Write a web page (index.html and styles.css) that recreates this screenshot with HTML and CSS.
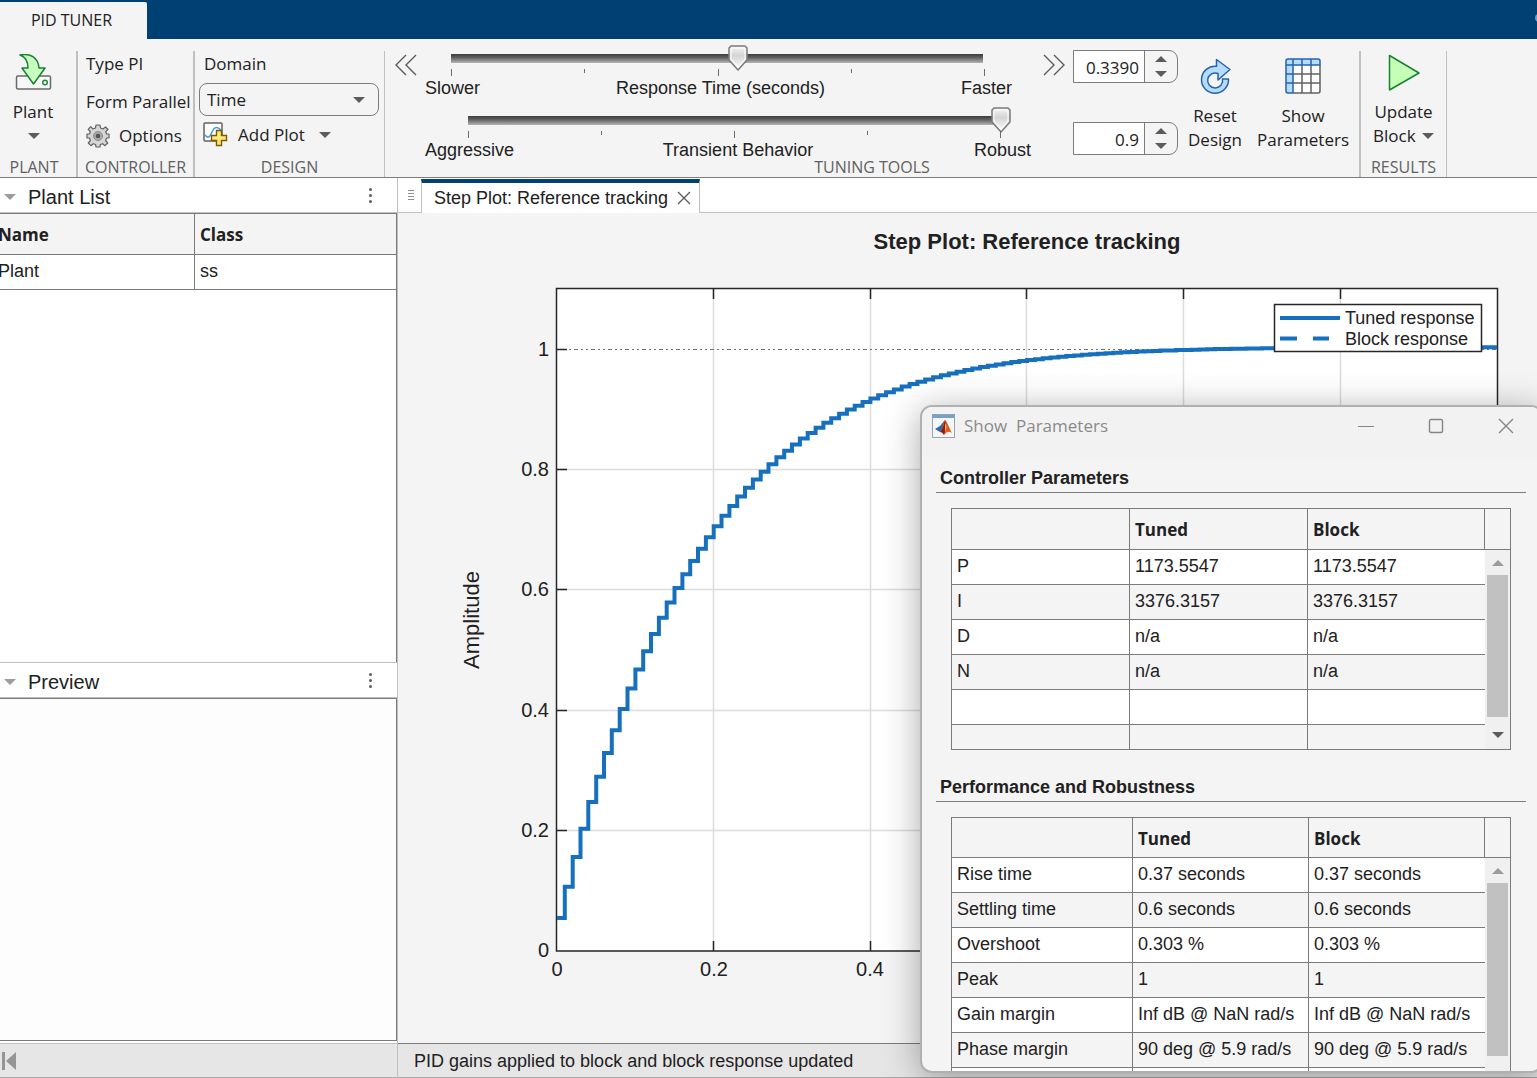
FILE: index.html
```html
<!DOCTYPE html>
<html lang="en">
<head>
<meta charset="utf-8">
<title>PID Tuner</title>
<link rel="stylesheet" href="styles.css">
</head>
<body>
<div class="app">
  <header class="topbar">
    <button class="topbar-tab" type="button">PID TUNER</button>
    <span class="topbar-dot"></span>
  </header>

  <div class="ribbon">
    <section class="group group-plant">
      <button class="big-button" type="button">
        <svg width="38" height="38" viewBox="0 0 38 38" fill="none">
          <rect x="2.500" y="22" width="34" height="13" rx="1.500" fill="#f8f8f8" stroke="#6a6a6a" stroke-width="1.500"/>
          <circle cx="31" cy="28.500" r="2.300" stroke="#1b8a3a" stroke-width="1.500"/>
          <path d="M6 1C16-1 24 3 25 14H31L19.500 30 8 14H14C14 7 12 3 6 1Z" fill="#c9ffbf" stroke="#1b7f36" stroke-width="1.500" stroke-linejoin="round"/>
        </svg>
        <span class="cap">Plant</span>
        <span class="caret caret-row"></span>
      </button>
      <h2 class="group-name">PLANT</h2>
    </section>

    <section class="group group-controller">
      <div class="stack">
        <span class="line">Type PI</span>
        <span class="line line-tall">Form Parallel</span>
        <button class="row-button" type="button">
          <svg width="24" height="24" viewBox="-12 -12 24 24">
            <path d="M-2-11H2L2.500-8 5-7 7.500-9 10-6.500 7.800-4.500 8.500-2H11V2H8.500L7.600 4.500 9.700 7 7 9.700 4.700 7.700 2.300 8.500 2 11H-2L-2.400 8.500-4.700 7.700-7 9.700-9.700 7-7.600 4.500-8.500 2H-11V-2H-8.500L-7.700-4.500-9.800-6.700-7.300-9.300-5-7-2.500-8Z" fill="#d6d6d6" stroke="#616161" stroke-width="1.200" stroke-linejoin="round"/>
            <circle r="4.500" fill="#aaa" stroke="#8a8a8a"/><circle r="2.300" fill="#555"/>
          </svg>
          <span>Options</span>
        </button>
      </div>
      <h2 class="group-name">CONTROLLER</h2>
    </section>

    <section class="group group-design">
      <div class="stack">
        <label class="line line-inset" for="domain">Domain</label>
        <div class="select-box">
          <select id="domain"><option>Time</option><option>Frequency</option></select>
          <span class="caret"></span>
        </div>
        <button class="row-button row-inset" type="button">
          <svg width="25" height="25" viewBox="0 0 25 25" fill="none">
            <rect x="1" y="1" width="18" height="18" rx="1" fill="#fff" stroke="#616161" stroke-width="1.500"/>
            <path d="M2 13C5 17 7 15 9 10S14 4 18 8" stroke="#3d9be0" stroke-width="1.500"/>
            <path d="M13.500 8.500H18.500V13.500H23.500V18.500H18.500V23.500H13.500V18.500H8.500V13.500H13.500Z" fill="#ffe97a" stroke="#7d5a00" stroke-width="1.400"/>
          </svg>
          <span>Add Plot</span>
          <span class="caret"></span>
        </button>
      </div>
      <h2 class="group-name">DESIGN</h2>
    </section>

    <section class="group group-tuning">
      <div class="tuning">
        <button class="step-button" type="button" aria-label="Slower range">
          <svg width="24" height="24" viewBox="0 0 24 24" fill="none" stroke="#5c5c5c" stroke-width="1.400"><path d="M12 2 2 12 12 22M22 2 12 12 22 22"/></svg>
        </button>
        <div class="sliders">
          <div class="slider slider-response">
            <input type="range" min="0" max="100" value="54" aria-label="Response Time (seconds)">
            <div class="ticks"><i></i><i></i><i></i><i></i><i></i></div>
            <div class="slider-text"><span>Slower</span><span class="mid">Response Time (seconds)</span><span>Faster</span></div>
          </div>
          <div class="slider slider-transient">
            <input type="range" min="0" max="100" value="100" aria-label="Transient Behavior">
            <div class="ticks"><i></i><i></i><i></i><i></i><i></i></div>
            <div class="slider-text"><span>Aggressive</span><span class="mid">Transient Behavior</span><span>Robust</span></div>
          </div>
        </div>
        <button class="step-button step-forward" type="button" aria-label="Faster range">
          <svg width="24" height="24" viewBox="0 0 24 24" fill="none" stroke="#5c5c5c" stroke-width="1.400"><path d="M2 2 12 12 2 22M12 2 22 12 12 22"/></svg>
        </button>
        <div class="spinners">
          <div class="spinner">
            <input type="text" value="0.3390" aria-label="Response time value">
            <div class="spin-buttons">
              <button type="button" aria-label="Increase"><span class="caret caret-up"></span></button>
              <button type="button" aria-label="Decrease"><span class="caret"></span></button>
            </div>
          </div>
          <div class="spinner">
            <input type="text" value="0.9" aria-label="Transient behavior value">
            <div class="spin-buttons">
              <button type="button" aria-label="Increase"><span class="caret caret-up"></span></button>
              <button type="button" aria-label="Decrease"><span class="caret"></span></button>
            </div>
          </div>
        </div>
        <button class="big-button button-reset" type="button">
          <svg width="38" height="38" viewBox="0 0 38 38" fill="none" stroke="#2563ae" stroke-width="1.500" stroke-linejoin="round">
            <path d="M20.500 1.500 34 11.500 22 22V15.500A7.500 7.500 0 1 0 26.500 21H32.500A13.500 13.500 0 1 1 20.500 8.300Z" fill="#b5dcff"/>
          </svg>
          <span class="cap">Reset<br>Design</span>
        </button>
        <button class="big-button button-show" type="button">
          <svg width="38" height="38" viewBox="0 0 38 38" fill="none">
            <rect x="2" y="2" width="34" height="34" rx="2" fill="#fff"/>
            <path d="M2 8V4Q2 2 4 2H34Q36 2 36 4V8H9V36H4Q2 36 2 34Z" fill="#b5dcff"/>
            <path d="M9 17H36M9 26H36M18 8V36M27 8V36M9 36H34Q36 36 36 34V8" stroke="#616161" stroke-width="1.500"/>
            <path d="M9 36H4Q2 36 2 34V4Q2 2 4 2H34Q36 2 36 4V8H2M9 2V36M18 2V8M27 2V8M2 17H9M2 26H9" stroke="#2563ae" stroke-width="1.500"/>
          </svg>
          <span class="cap">Show<br>Parameters</span>
        </button>
      </div>
      <h2 class="group-name">TUNING TOOLS</h2>
    </section>

    <section class="group group-results">
      <button class="big-button" type="button">
        <svg width="38" height="38" viewBox="0 0 38 38"><path d="M4.500 1.500 34 19 4.500 36Z" fill="#c4ffb5" stroke="#1b7f36" stroke-width="1.500" stroke-linejoin="round"/></svg>
        <span class="cap">Update<br>Block <span class="caret"></span></span>
      </button>
      <h2 class="group-name">RESULTS</h2>
    </section>
  </div>

  <main class="work">
    <aside class="side">
      <section class="panel">
        <header class="panel-head">
          <span class="caret caret-light"></span>
          <h2>Plant List</h2>
          <button class="kebab" type="button" aria-label="Plant List actions"><i></i><i></i><i></i></button>
        </header>
        <div class="panel-body">
          <table class="plants">
            <thead><tr><th scope="col">Name</th><th scope="col">Class</th></tr></thead>
            <tbody><tr><td>Plant</td><td>ss</td></tr></tbody>
          </table>
        </div>
      </section>
      <section class="panel panel-preview">
        <header class="panel-head">
          <span class="caret caret-light"></span>
          <h2>Preview</h2>
          <button class="kebab" type="button" aria-label="Preview actions"><i></i><i></i><i></i></button>
        </header>
        <div class="panel-body"></div>
      </section>
      <footer class="status status-side">
        <button type="button" aria-label="Collapse panel">
          <svg width="14" height="18" viewBox="0 0 14 18" fill="#969696"><path d="M0 0H3V18H0ZM14 0V18L4 9Z"/></svg>
        </button>
      </footer>
    </aside>

    <section class="document">
      <div class="tabs">
        <span class="grip"></span>
        <div class="tab">
          <span>Step Plot: Reference tracking</span>
          <button type="button" aria-label="Close tab"><svg width="14" height="14" viewBox="0 0 14 14" fill="none" stroke="#5c5c5c" stroke-width="1.400"><path d="M1 1 13 13M13 1 1 13"/></svg></button>
        </div>
      </div>
      <svg class="plot" viewBox="-1 0 1139 830" role="img" aria-label="Step Plot: Reference tracking">
        <text class="plot-title" x="628" y="36">Step Plot: Reference tracking</text>
        <rect x="158" y="76" width="940" height="662" fill="#fff"/>
        <path class="grid" d="M314.500 76V738M471.500 76V738M627.500 76V738M784.500 76V738M941.500 76V738M158 256.500H1098M158 376.500H1098M158 497.500H1098M158 617.500H1098"/>
        <path class="grid-ref" d="M158 136.500H1098"/>
        <path class="axes" d="M157.500 75.500H1098.500V738H157.500ZM314.500 76V86M471.500 76V86M627.500 76V86M784.500 76V86M941.500 76V86M314.500 738V728M471.500 738V728M627.500 738V728M784.500 738V728M941.500 738V728M158 136.500H168M158 256.500H168M158 376.500H168M158 497.500H168M158 617.500H168"/>
        <path class="curve" id="curve"/>
        <g class="tick-y">
          <text x="150" y="143">1</text><text x="150" y="263">0.8</text><text x="150" y="383">0.6</text>
          <text x="150" y="504">0.4</text><text x="150" y="624">0.2</text><text x="150" y="744">0</text>
        </g>
        <g class="tick-x">
          <text x="158" y="763">0</text><text x="315" y="763">0.2</text><text x="471" y="763">0.4</text>
          <text x="628" y="763">0.6</text><text x="784" y="763">0.8</text><text x="941" y="763">1</text>
        </g>
        <text class="axis-name" transform="translate(80 407) rotate(-90)">Amplitude</text>
        <rect x="875.500" y="91.500" width="207" height="47" fill="#fff" stroke="#262626" stroke-width="1.500"/>
        <path class="curve" d="M881 105H941"/>
        <path class="curve" d="M881 125.500H898M914 125.500H930"/>
        <text class="legend" x="946" y="111">Tuned response</text>
        <text class="legend" x="946" y="132">Block response</text>
      </svg>
      <footer class="status"><span>PID gains applied to block and block response updated</span></footer>
    </section>
  </main>
</div>

<div class="dialog" role="dialog" aria-labelledby="dialog-title">
  <header class="dialog-bar">
    <svg width="23" height="24" viewBox="0 0 23 24">
      <rect x=".5" y=".5" width="22" height="23" fill="#f4f6f8" stroke="#9aa4ad"/>
      <rect x=".5" y=".5" width="22" height="3.500" fill="#7ba0c4"/>
      <path d="M3 15 8 12 13 6 11 14 8 18Z" fill="#2f6aa8"/>
      <path d="M13 6C15 7 17 14 20 19 17 17 15 17 12 21 11 19 10 18 8 18 11 15 11 9 13 6Z" fill="#e2571b"/>
      <path d="M13 6C14 9 14 14 12 21 11 19 10 18 8 18 11 15 12 10 13 6Z" fill="#8e1d12"/>
      <path d="M13 9C15 12 15 15 13 18Z" fill="#ffb13d"/>
    </svg>
    <h2 id="dialog-title">Show&nbsp; Parameters</h2>
    <div class="window-buttons">
      <button type="button" aria-label="Minimize"><svg width="16" height="16" viewBox="0 0 16 16" stroke="#858585"><path d="M0 8.500H16"/></svg></button>
      <button type="button" aria-label="Maximize"><svg width="16" height="16" viewBox="0 0 16 16" fill="none" stroke="#858585" stroke-width="1.400"><rect x="1.500" y="1.500" width="13" height="13" rx="1.500"/></svg></button>
      <button type="button" aria-label="Close"><svg width="16" height="16" viewBox="0 0 16 16" stroke="#858585" stroke-width="1.400"><path d="M1 1 15 15M15 1 1 15"/></svg></button>
    </div>
  </header>
  <div class="dialog-body">
    <h3>Controller Parameters</h3>
    <div class="frame frame-controller">
      <table class="params">
        <thead><tr><th></th><th scope="col">Tuned</th><th scope="col">Block</th><th class="gutter"></th></tr></thead>
        <tbody>
          <tr><td>P</td><td>1173.5547</td><td>1173.5547</td>
            <td class="gutter" rowspan="6"><div class="scroll"><span class="caret caret-up caret-light"></span><span class="thumb"></span><span class="caret"></span></div></td></tr>
          <tr><td>I</td><td>3376.3157</td><td>3376.3157</td></tr>
          <tr><td>D</td><td>n/a</td><td>n/a</td></tr>
          <tr><td>N</td><td>n/a</td><td>n/a</td></tr>
          <tr><td></td><td></td><td></td></tr>
          <tr><td></td><td></td><td></td></tr>
        </tbody>
      </table>
    </div>
    <h3>Performance and Robustness</h3>
    <div class="frame frame-performance">
      <table class="params">
        <thead><tr><th></th><th scope="col">Tuned</th><th scope="col">Block</th><th class="gutter"></th></tr></thead>
        <tbody>
          <tr><td>Rise time</td><td>0.37 seconds</td><td>0.37 seconds</td>
            <td class="gutter" rowspan="7"><div class="scroll"><span class="caret caret-up caret-light"></span><span class="thumb"></span></div></td></tr>
          <tr><td>Settling time</td><td>0.6 seconds</td><td>0.6 seconds</td></tr>
          <tr><td>Overshoot</td><td>0.303 %</td><td>0.303 %</td></tr>
          <tr><td>Peak</td><td>1</td><td>1</td></tr>
          <tr><td>Gain margin</td><td>Inf dB @ NaN rad/s</td><td>Inf dB @ NaN rad/s</td></tr>
          <tr><td>Phase margin</td><td>90 deg @ 5.9 rad/s</td><td>90 deg @ 5.9 rad/s</td></tr>
          <tr><td></td><td></td><td></td></tr>
        </tbody>
      </table>
    </div>
  </div>
</div>
<script src="plot.js"></script>
</body>
</html>
```
FILE: styles.css
```css
* { box-sizing: border-box; }
:root {
  --ui: "Open Sans", "Noto Sans", sans-serif;
  --body: "Liberation Sans", Arial, sans-serif;
  --line: #7b7b7b;
  --bg: #f4f4f4;
  --navy: #004073;
}
html, body { height: 100%; }
body { margin: 0; overflow: hidden; position: relative; background: var(--bg); color: #212121; font: 18px/24px var(--body); }
h2, h3 { margin: 0; font-weight: 400; }
button { border: 0; padding: 0; margin: 0; background: none; color: inherit; font: inherit; }
svg { display: block; flex: none; }
.app { display: flex; flex-direction: column; height: 100vh; }
.caret { display: inline-block; flex: none; border: 6px solid transparent; border-top-color: #5c5c5c; border-bottom: 0; }
.caret-up { border-top: 0; border-bottom: 6px solid #5c5c5c; }
.caret-light { border-top-color: #9c9c9c; border-bottom-color: #9c9c9c; }

/* top bar */
.topbar { display: flex; align-items: flex-end; justify-content: space-between; flex: none; height: 39px; background: var(--navy); overflow: hidden; }
.topbar-tab { width: 147px; height: 37px; padding: 0 4px 2px 0; border-radius: 0 2px 0 0; background: var(--bg); font: 16px/34px var(--ui); }
.topbar-dot { width: 8px; height: 8px; margin: 0 -6px 17px 0; border-radius: 4px; background: #6f9cc4; }

/* ribbon */
.ribbon { display: flex; flex: none; height: 139px; padding-top: 12px; border-bottom: 1px solid var(--line); font: 17px/24px var(--ui); }
.group { display: flex; flex-direction: column; justify-content: space-between; flex: none; border-right: 1px solid #c0c0c0; }
.group-plant { width: 78px; border-right-width: 2px; }
.group-controller { width: 117px; border-right-width: 2px; }
.group-design { width: 190px; }
.group-tuning { flex: 0 1 976px; border-right-width: 2px; }
.group-results { width: 86px; }
.group-name { font-size: 16px; line-height: 20px; text-align: center; color: #616161; }
.group-plant .group-name { padding-right: 8px; }
.big-button { display: flex; flex-direction: column; align-items: center; gap: 8px; padding-top: 3px; white-space: nowrap; }
.group-plant .big-button { padding-right: 10px; }
.caret-row { margin: 1px 0 0 2px; }
.cap .caret { margin: 0 0 3px 2px; }
.stack { display: flex; flex-direction: column; }
.group-controller .stack { padding-left: 8px; }
.group-design .stack { padding-left: 4px; }
.line { line-height: 26px; white-space: nowrap; }
.line-tall { padding: 12px 0; line-height: 26px; }
.line-inset { margin-left: 5px; }
.row-button { display: flex; align-items: center; gap: 9px; white-space: nowrap; }
.group-controller .row-button { margin-top: -3px; }
.row-inset { gap: 10px; margin: 6px 0 0 4px; }
.row-inset .caret { margin-left: 4px; }
.select-box { display: flex; align-items: center; position: relative; width: 180px; height: 33px; margin-top: 6px; }
.select-box select { appearance: none; width: 100%; height: 100%; padding: 0 7px; border: 1px solid var(--line); border-radius: 8px; background: transparent; color: inherit; font: inherit; }
.select-box .caret { position: absolute; right: 14px; pointer-events: none; }

.tuning { display: flex; align-items: flex-start; height: 104px; }
.step-button { margin: 2px 7px 0 9px; }
.step-forward { margin: 2px 7px 0 11px; }
.sliders { flex: 1; min-width: 300px; font: 18px/22px var(--body); }
.slider { height: 62px; margin-top: -6px; }
.slider + .slider { margin-top: 0; }
.slider input { display: block; appearance: none; height: 26px; margin: 0; background: linear-gradient(#3c3c3c, #606060 40%, #b4b4b4) no-repeat center / calc(100% - 20px) 9px; }
.slider input::-webkit-slider-thumb { appearance: none; width: 20px; height: 26px; background: url("data:image/svg+xml,%3Csvg xmlns='http://www.w3.org/2000/svg' viewBox='0 0 20 26'%3E%3ClinearGradient id='g' x2='0' y2='1'%3E%3Cstop stop-color='%23f4f4f4'/%3E%3Cstop offset='.4' stop-color='%23d4d4d4'/%3E%3Cstop offset='1' stop-color='%23fff'/%3E%3C/linearGradient%3E%3Cpath d='M3 1H17L19 3V15L10 25 1 15V3Z' fill='url(%23g)' stroke='%23777b80' stroke-width='1.500' stroke-linejoin='round'/%3E%3Cpath d='M4 3H16L17 4V14L10 22 3 14V4Z' fill='none' stroke='%23fff'/%3E%3C/svg%3E") no-repeat center / 20px 26px; }
.slider-response { padding-right: 19px; }
.slider-response input { width: calc(100% - 35px); margin-left: 16px; }
.slider-response .ticks { margin: -2px 27px 0 26px; }
.slider-transient input { width: calc(100% - 53px); margin-left: 33px; }
.slider-transient .ticks { margin: -2px 30px 0 43px; }
.ticks { display: flex; justify-content: space-between; height: 8px; }
.ticks i { width: 1px; height: 7px; background: #6b6b6b; }
.ticks i:nth-child(even) { height: 4px; }
.slider-text { display: flex; justify-content: space-between; white-space: nowrap; }
.slider-transient .mid { padding-right: 12px; }
.spinners { display: flex; flex-direction: column; gap: 39px; margin-top: -1px; }
.spinner { display: flex; width: 105px; height: 33px; border: 1px solid var(--line); border-radius: 0 9px 9px 0; overflow: hidden; }
.spinner input { width: 70px; padding: 2px 5px 0; border: 0; background: #fff; color: inherit; font: inherit; text-align: right; }
.spin-buttons { display: flex; flex-direction: column; flex: 1; border-left: 1px solid var(--line); }
.spin-buttons button { display: flex; flex: 1; align-items: center; justify-content: center; }
.button-reset { width: 60px; margin-left: 7px; padding-top: 7px; }
.button-show { width: 92px; margin: 0 10px 0 12px; padding-top: 6px; }
.button-show .cap { margin-top: 1px; }

/* work area */
.work { display: flex; flex: 1; min-height: 0; }
.side { display: flex; flex-direction: column; flex: none; width: 398px; border-right: 1px solid #c0c0c0; background: #fff; }
.panel { display: flex; flex-direction: column; flex: 485 1 0; min-height: 0; }
.panel-preview { flex: 378 1 0; margin-bottom: 2px; border-top: 1px solid #c0c0c0; }
.panel-preview .panel-body { border-bottom: 1px solid var(--line); background: #fdfdfd; }
.panel-head { display: flex; align-items: center; gap: 12px; flex: none; height: 35px; padding: 4px 25px 0 4px; border-bottom: 1px solid #c0c0c0; }
.panel-head h2 { flex: 1; font-size: 20px; line-height: 24px; }
.kebab { display: flex; flex-direction: column; gap: 3px; margin-bottom: 4px; }
.kebab i { width: 3px; height: 3px; border-radius: 2px; background: #5c5c5c; }
.panel-body { flex: 1; overflow: hidden; border-top: 1px solid var(--line); border-right: 1px solid var(--line); }
table { border-collapse: separate; border-spacing: 0; table-layout: fixed; }
th, td { padding: 0 5px; border: solid var(--line); border-width: 0 1px 1px 0; text-align: left; font-size: 18px; line-height: 24px; white-space: nowrap; }
th { height: 41px; padding-top: 2px; background: var(--bg); font: bold 17px/24px var(--ui); }
td { height: 35px; padding-bottom: 3px; }
.plants { width: calc(100% + 7px); margin-left: -7px; }
.plants th:first-child, .plants td:first-child { width: 202px; }
.plants th:last-child, .plants td:last-child { border-right: 0; }
.status { display: flex; align-items: center; flex: none; height: 35px; padding-left: 16px; border-top: 1px solid var(--line); border-bottom: 1px solid #a8a8a8; background: #e6e6e6; }
.status-side { padding-left: 2px; border-top-color: #c0c0c0; }
.document { display: flex; flex-direction: column; flex: 1; min-width: 0; }
.tabs { display: flex; flex: none; height: 35px; padding-left: 1px; background: linear-gradient(#c0c0c0, #c0c0c0) no-repeat bottom / 100% 1px, #fff; }
.grip { width: 22px; height: 12px; margin-top: 12px; background: repeating-linear-gradient(#8f8f8f 0 1px, transparent 1px 3px) no-repeat 9px 0 / 6px 100%; }
.tab { display: flex; align-items: center; gap: 9px; height: 34px; padding: 0 8px 0 12px; margin-top: 1px; border: 1px solid #c0c0c0; border-width: 4px 1px 0; border-top-color: var(--navy); background: #fff; white-space: nowrap; }
.plot { flex: 1; width: 100%; min-height: 0; fill: #212121; font-family: var(--body); }
.plot-title { font-size: 22px; font-weight: 700; text-anchor: middle; }
.axis-name { font-size: 22px; text-anchor: middle; }
.tick-y { font-size: 20px; text-anchor: end; }
.tick-x { font-size: 20px; text-anchor: middle; }
.legend { font-size: 18px; }
.grid { stroke: #dcdcdc; fill: none; stroke-width: 1.5; }
.grid-ref { stroke: #707070; stroke-dasharray: 4 3 2 3 2 3; }
.axes { stroke: #262626; fill: none; stroke-width: 1.5; }
.curve { stroke: #1670be; fill: none; stroke-width: 4; }

/* floating parameter window */
.dialog { position: absolute; left: 920px; right: -6px; top: 405px; bottom: 5px; display: flex; flex-direction: column; overflow: hidden; border: 2px solid #b0b0b0; border-radius: 12px; background: var(--bg); box-shadow: 0 6px 36px rgba(0, 0, 0, .34); }
.dialog-bar { display: flex; align-items: center; flex: none; gap: 9px; height: 50px; padding: 0 27px 12px 10px; background: #f2f2f2; }
.dialog-bar h2 { flex: 1; font: 17px/24px var(--ui); color: #8a8a8a; }
.window-buttons { display: flex; gap: 54px; }
.dialog-body { flex: 1; min-height: 0; padding: 0 15px 0 14px; overflow: hidden; }
.dialog-body h3 { height: 36px; padding: 9px 4px 0; border-bottom: 1px solid var(--line); font-weight: 700; font-size: 18px; line-height: 24px; }
.frame { width: 560px; max-width: 100%; margin: 15px 0 16px 15px; border: 1px solid var(--line); overflow: hidden; }
.frame-controller { height: 242px; }
.params { width: 100%; }
.params td { background: #fff; }
.params tr:nth-child(even) td { background: var(--bg); }
.params td:nth-child(3) { border-right: 0; }
.params th:nth-child(-n+2) { width: 178px; }
.frame-performance th { height: 40px; }
.frame-performance th:first-child { width: 181px; }
.frame-performance th:nth-child(2) { width: 176px; }
.params .gutter { width: 25px; padding: 0; border-right: 0; vertical-align: top; background: #f0f0f0; }
.params th.gutter { background: var(--bg); }
.scroll { display: flex; flex-direction: column; align-items: center; gap: 9px; padding-top: 10px; }
.thumb { width: 21px; height: 142px; background: #c1c1c1; }
.scroll .caret:last-child { margin-top: 6px; }
.frame-performance .thumb { height: 173px; }
```
FILE: plot.js
```js
// Sampled closed-loop step response, drawn as a zero-order-hold staircase.
(function () {
  var x0 = 158, y0 = 738, xScale = 783.5, yScale = 602, dt = 0.01, samples = 120;

  function response(k) {
    var decay = 0.053 + 0.0566 * k + 5e-5 * k * k + 1e-6 * k * k * k;
    return 1.003 - Math.exp(-decay);
  }

  var d = "M" + x0 + " " + Math.round(y0 - response(0) * yScale);
  for (var k = 1; k <= samples; k++) {
    d += "H" + (x0 + k * dt * xScale).toFixed(1);
    if (k < samples) d += "V" + (y0 - response(k) * yScale).toFixed(1);
  }
  document.getElementById("curve").setAttribute("d", d);
})();
```
